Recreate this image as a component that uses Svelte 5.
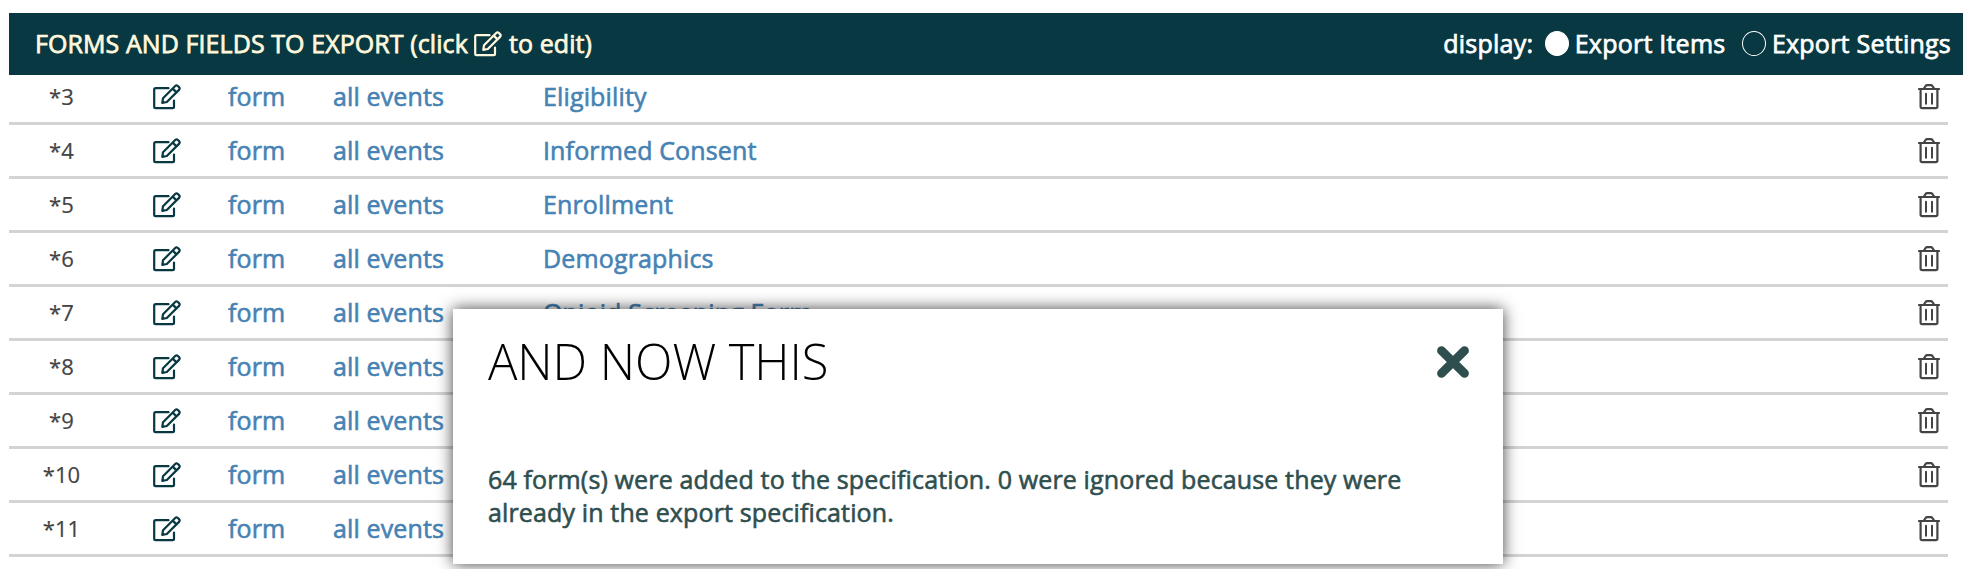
<script>
  const rows = [
    { n: 3, name: 'Eligibility' },
    { n: 4, name: 'Informed Consent' },
    { n: 5, name: 'Enrollment' },
    { n: 6, name: 'Demographics' },
    { n: 7, name: 'Opioid Screening Form' },
    { n: 8, name: '' },
    { n: 9, name: '' },
    { n: 10, name: '' },
    { n: 11, name: '' }
  ];
  let display = $state('items');
  let open = $state(true);
</script>

{#snippet editIcon()}
  <svg class="edit" viewBox="0 0 28 26" width="28" height="26" fill="none" stroke="currentColor" stroke-width="2.2" stroke-linejoin="round" stroke-linecap="round">
    <path d="M15.5 4.2H2.6Q1.2 4.2 1.2 5.6V22.8Q1.2 24.2 2.6 24.2H19.6Q21 24.2 21 22.8V16.5" />
    <path d="M9.3 18.8L10 14.2L22.2 2Q23.5 .8 24.9 2L26 3.1Q27.3 4.5 26 5.9L13.8 18L9.3 18.8ZM19.7 4.6L23.5 8.4" />
  </svg>
{/snippet}

<div class="page">
  <header>
    <h2>FORMS AND FIELDS TO EXPORT (click {@render editIcon()} to edit)</h2>
    <div class="display">
      <span class="label">display:</span>
      <button class="option" onclick={() => (display = 'items')}>
        <i class:on={display === 'items'}></i><span class="items">Export Items</span>
      </button>
      <button class="option" onclick={() => (display = 'settings')}>
        <i class:on={display === 'settings'}></i><span class="settings">Export Settings</span>
      </button>
    </div>
  </header>

  <div class="rows">
    {#each rows as row (row.n)}
      <div class="row">
        <span class="num">*{row.n}</span>
        <span class="pen">{@render editIcon()}</span>
        <span>form</span>
        <span>all events</span>
        <span class="name">{row.name}</span>
        <svg class="trash" viewBox="0 0 22 26" width="22" height="26" fill="none" stroke="currentColor" stroke-linejoin="round" stroke-linecap="round">
          <path stroke-width="2.2" d="M1 5H21M5.7 4.8L7.6 2Q8.2 1.2 9.2 1.2H12.8Q13.8 1.2 14.4 2L16.3 4.8M2.6 5V22.6Q2.6 24.2 4.2 24.2H17.8Q19.4 24.2 19.4 22.6V5" />
          <path stroke-width="2" d="M8 9.8V19.8M14 9.8V19.8" />
        </svg>
      </div>
    {/each}
  </div>

  {#if open}
    <div class="dialog" role="dialog">
      <div class="top">
        <h1>AND NOW THIS</h1>
        <button class="close" aria-label="Close" onclick={() => (open = false)}>
          <svg viewBox="0 0 32 32" width="32" height="32" fill="none" stroke="currentColor" stroke-width="8.8" stroke-linecap="round"><path d="M4.5 4.7L27.5 27.3M27.5 4.7L4.5 27.3" /></svg>
        </button>
      </div>
      <p>64 form(s) were added to the specification. 0 were ignored because they were already in the export specification.</p>
    </div>
  {/if}
</div>

<style>
  :global(body) { background: #fff; }
  .page {
    position: relative;
    box-sizing: border-box;
    width: 1963px;
    height: 569px;
    padding: 13px 0 0 9px;
    overflow: hidden;
    font: 400 25px/33px "Open Sans", sans-serif;
    letter-spacing: 0.14px;
    -webkit-text-stroke: 0.6px currentColor;
  }
  header {
    position: relative;
    z-index: 1;
    box-sizing: border-box;
    height: 62px;
    padding: 0 12px 2px 26px;
    display: flex;
    align-items: center;
    justify-content: space-between;
    background: #083842;
    color: #fff;
    -webkit-text-stroke-width: 0.75px;
  }
  h2 { margin: 0; font: inherit; letter-spacing: 0.08px; color: cornsilk; white-space: nowrap; -webkit-text-stroke-color: cornsilk; }
  h2 .edit { vertical-align: -4px; }
  .display { display: flex; align-items: center; letter-spacing: 0.23px; -webkit-text-stroke-color: #fff; }
  .label { margin-right: 12px; }
  button { border: 0; padding: 0; background: none; color: inherit; font: inherit; letter-spacing: inherit; }
  .option { display: flex; align-items: center; gap: 5.5px; white-space: nowrap; }
  .option + .option { margin-left: 17px; }
  .option i { box-sizing: border-box; width: 24px; height: 25px; border: 1px solid #fff; border-radius: 50%; }
  .option i.on { background: #fff; }
  .rows { margin-top: -4px; width: 1939px; }
  .row {
    box-sizing: border-box;
    height: 54px;
    padding: 0 8px 1px 0;
    border-bottom: 3px solid lightgray;
    display: grid;
    grid-template-columns: 105px 114px 105px 210px 1fr 22px;
    align-items: center;
    color: steelblue;
    -webkit-text-stroke-color: steelblue;
  }
  .num { text-align: center; font-size: 22px; color: #444; -webkit-text-stroke: 0.2px #444; }
  .pen { padding: 1px 0 0 39px; color: #083842; }
  svg { display: block; }
  h2 svg { display: inline-block; }
  .trash { color: #444; margin-top: 1px; }
  .dialog {
    position: absolute;
    left: 453px;
    top: 309px;
    box-sizing: border-box;
    width: 1050px;
    height: 255px;
    padding: 18px 34px 0 35px;
    background: #fff;
    box-shadow: 0 0 15px rgba(0, 0, 0, 0.75);
    color: darkslategray;
    -webkit-text-stroke-color: darkslategray;
  }
  .top { display: flex; align-items: center; justify-content: space-between; height: 70px; }
  h1 { margin: -2px 0 0; font-weight: 300; font-size: 49px; line-height: 65px; letter-spacing: -0.08px; color: #000; white-space: nowrap; -webkit-text-stroke: 0; }
  p { margin: 66px 50px 0 0; }
</style>
